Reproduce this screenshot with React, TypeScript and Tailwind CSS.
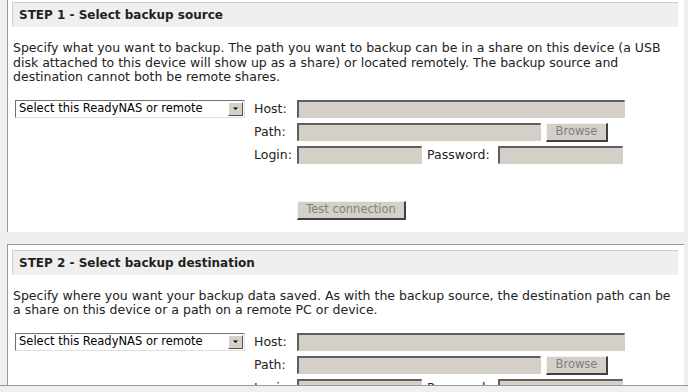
import React from "react";

const inputCls =
    "h-[18px] bg-[#d4d0c8] border-t-2 border-l-2 border-t-[#5f5f5f] border-l-[#5f5f5f] border-b border-r border-b-[#d4d0c8] border-r-[#d4d0c8]";
const buttonCls =
    "h-[19px] bg-[#d4d0c8] text-[#808080] text-[11.5px] leading-none flex items-center justify-center border-t border-l border-t-[#f4f4f4] border-l-[#f4f4f4] border-b-2 border-r-2 border-b-[#404040] border-r-[#404040]";
const labelCls = "text-[12.5px] leading-[18px] text-[#222]";

function SourceSelect() {
    return (
        <div className="w-[230px] h-[18px] bg-white flex items-center border-t border-l border-t-[#707070] border-l-[#707070] border-b border-r border-b-[#e0e0e0] border-r-[#e0e0e0]">
            <span className="flex-1 pl-[3px] text-[11.5px] leading-none text-black">Select this ReadyNAS or remote</span>
            <div className="w-[15px] h-[14px] mr-[1px] bg-[#d4d0c8] flex items-center justify-center border-t border-l border-t-white border-l-white border-b border-r border-b-[#505050] border-r-[#505050]">
                <svg width="7" height="4" viewBox="0 0 7 4">
                    <path d="M1 0.5h5L3.5 3z" fill="#000" />
                </svg>
            </div>
        </div>
    );
}

function Step({ title, text, showTest }: { title: string; text: string; showTest: boolean }) {
    return (
        <div className="ml-[7px] w-[677px] bg-white border-t border-l border-[#999999] pt-[5px] pl-[4px] pr-[6px] pb-[12px]">
            <div className="h-[25px] bg-[#efefef] border-t border-l border-[#cfcfcf] flex items-center pl-[6px]">
                <span className="text-[12px] font-bold text-[#222]">{title}</span>
            </div>
            <p className="mt-[14px] pl-[1px] text-[12.5px] leading-[14.5px] text-[#222]">{text}</p>
            <div className="mt-[15px] pl-[3px] flex">
                <SourceSelect />
                <div className="ml-[9px] flex flex-col gap-[5px]">
                    <div className="flex items-center h-[18px]">
                        <span className={`${labelCls} w-[43px]`}>Host:</span>
                        <div className={`${inputCls} w-[328px]`} />
                    </div>
                    <div className="flex items-start h-[18px]">
                        <span className={`${labelCls} w-[43px]`}>Path:</span>
                        <div className={`${inputCls} w-[244px]`} />
                        <div className={`${buttonCls} ml-[5px] w-[62px]`}>Browse</div>
                    </div>
                    <div className="flex items-center h-[18px]">
                        <span className={`${labelCls} w-[43px]`}>Login:</span>
                        <div className={`${inputCls} w-[125px]`} />
                        <span className={`${labelCls} ml-[5px] w-[71px]`}>Password:</span>
                        <div className={`${inputCls} w-[125px]`} />
                    </div>
                    {showTest && (
                        <div className="mt-[32px] pl-[43px]">
                            <div className={`${buttonCls} w-[109px]`}>Test connection</div>
                        </div>
                    )}
                </div>
            </div>
        </div>
    );
}

export default function App() {
    return (
        <div className="w-[688px] h-[392px] bg-[#efefef] overflow-hidden" style={{ fontFamily: '"DejaVu Sans", Verdana, sans-serif' }}>
            <div className="h-[386px] overflow-hidden border-b border-[#999999]">
                <div className="-mt-[4px]">
                    <Step
                        title="STEP 1 - Select backup source"
                        text="Specify what you want to backup. The path you want to backup can be in a share on this device (a USB disk attached to this device will show up as a share) or located remotely. The backup source and destination cannot both be remote shares."
                        showTest={true}
                    />
                </div>
                <div className="mt-[12px]">
                    <Step
                        title="STEP 2 - Select backup destination"
                        text="Specify where you want your backup data saved. As with the backup source, the destination path can be a share on this device or a path on a remote PC or device."
                        showTest={false}
                    />
                </div>
            </div>
        </div>
    );
}
